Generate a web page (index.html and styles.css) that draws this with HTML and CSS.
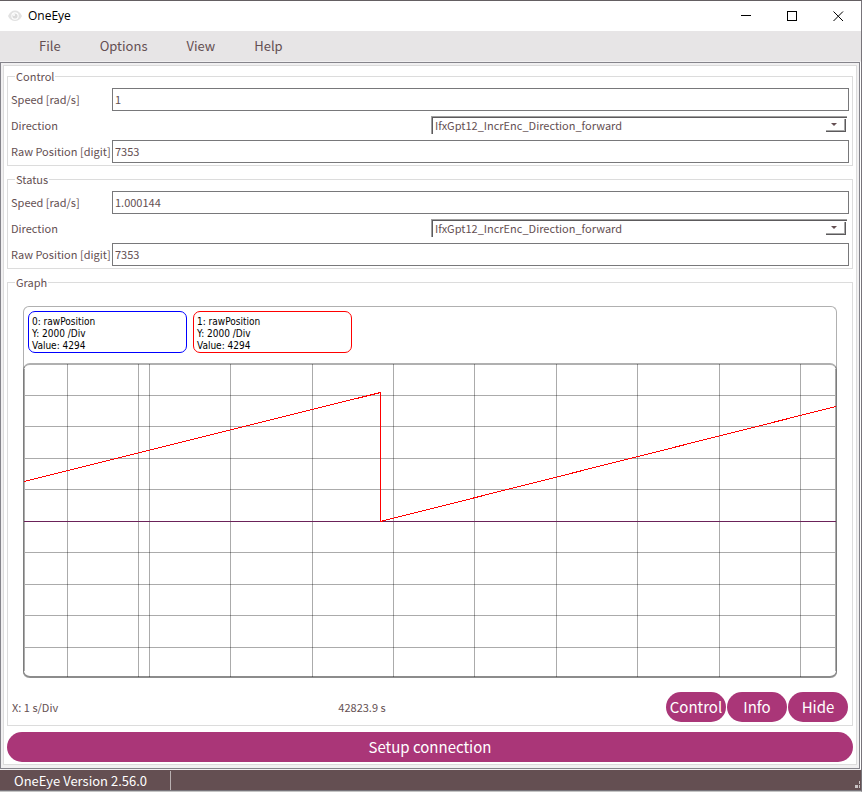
FILE: index.html
```html
<!DOCTYPE html>
<html lang="en">
<head>
<meta charset="utf-8">
<title>OneEye</title>
<link rel="stylesheet" href="styles.css">
</head>
<body>
<div class="window">
  <header class="titlebar">
    <svg class="app-icon" width="14" height="12" viewBox="0 0 14 12" aria-hidden="true">
      <path d="M0 6C1.500 2.500 4 .5 7 .5S12.500 2.500 14 6C12.500 9.500 10 11 7 11S1.500 9.500 0 6Z" fill="#e2e2e2"/>
      <circle cx="7" cy="6" r="3.700" fill="#fff"/>
      <circle cx="7" cy="6" r="2.600" fill="#dadada"/>
      <circle cx="6" cy="5" r="1" fill="#fff"/>
    </svg>
    <h1 class="app-name">OneEye</h1>
    <button class="caption" type="button" aria-label="Minimize"><svg width="12" height="11" viewBox="0 0 12 11"><path d="M1 4.500H11"/></svg></button>
    <button class="caption" type="button" aria-label="Maximize"><svg width="11" height="11" viewBox="0 0 11 11"><path d="M.5 .5H9.500V9.500H.5Z"/></svg></button>
    <button class="caption" type="button" aria-label="Close"><svg class="smooth" width="11" height="11" viewBox="0 0 11 11"><path d="M.5 .5L10 10M10 .5L.5 10"/></svg></button>
  </header>
  <nav class="menubar">
    <button type="button">File</button>
    <button type="button">Options</button>
    <button type="button">View</button>
    <button type="button">Help</button>
  </nav>
  <div class="frame">
    <main class="pane">
      <fieldset class="group">
        <legend>Control</legend>
        <div class="row"><label for="c-speed">Speed [rad/s]</label><input id="c-speed" type="text" value="1"></div>
        <div class="row halves"><label for="c-dir">Direction</label>
          <div class="combo"><select id="c-dir"><option>IfxGpt12_IncrEnc_Direction_forward</option></select><span class="drop" aria-hidden="true"></span></div></div>
        <div class="row"><label for="c-pos">Raw Position [digit]</label><input id="c-pos" type="text" value="7353"></div>
      </fieldset>
      <fieldset class="group">
        <legend>Status</legend>
        <div class="row"><label for="s-speed">Speed [rad/s]</label><input id="s-speed" type="text" value="1.000144"></div>
        <div class="row halves"><label for="s-dir">Direction</label>
          <div class="combo"><select id="s-dir"><option>IfxGpt12_IncrEnc_Direction_forward</option></select><span class="drop" aria-hidden="true"></span></div></div>
        <div class="row"><label for="s-pos">Raw Position [digit]</label><input id="s-pos" type="text" value="7353"></div>
      </fieldset>
      <fieldset class="group graph">
        <legend>Graph</legend>
        <div class="graph-body">
          <div class="chart">
            <div class="channels">
              <div class="channel blue"><div>0: rawPosition</div><div>Y: 2000 /Div</div><div>Value: 4294</div></div>
              <div class="channel red"><div>1: rawPosition</div><div>Y: 2000 /Div</div><div>Value: 4294</div></div>
            </div>
            <div class="plot">
              <svg viewBox="0 0 814 315" preserveAspectRatio="none" role="img" aria-label="rawPosition over time">
                <path class="grid" d="M44.500 1V314M115.500 1V314M126.500 1V314M207.500 1V314M289.500 1V314M370.500 1V314M451.500 1V314M533.500 1V314M614.500 1V314M696.500 1V314M777.500 1V314"/>
                <path class="grid" d="M1 32.500H813M1 63.500H813M1 95.500H813M1 126.500H813M1 189.500H813M1 221.500H813M1 252.500H813M1 284.500H813M1.500 6V308M812.500 6V308"/>
                <path class="axis" d="M1 158.500H813"/>
                <path class="trace" d="M1 118.500L357.500 29.500V158.500L813 43.500"/>
              </svg>
            </div>
          </div>
          <div class="graph-foot">
            <span>X: 1 s/Div</span>
            <span class="time">42823.9 s</span>
            <div class="actions">
              <button class="pill" type="button">Control</button>
              <button class="pill" type="button">Info</button>
              <button class="pill" type="button">Hide</button>
            </div>
          </div>
        </div>
      </fieldset>
      <button class="pill wide" type="button">Setup connection</button>
    </main>
  </div>
  <footer class="statusbar">
    <span class="version">OneEye Version 2.56.0</span>
    <svg class="grip" width="6" height="7" viewBox="0 0 6 7" aria-hidden="true"><path d="M0 4H3V7H0ZM4 4H5V7H4ZM4 0H5V3H4Z" fill="#c9c3c4"/></svg>
  </footer>
</div>
</body>
</html>
```
FILE: styles.css
```css
* { box-sizing: border-box; }

body {
  margin: 0;
  background: #fff;
  color: #644f52;
  font-family: "Noto Sans CJK SC", "Noto Sans", sans-serif;
  font-size: 11px;
  line-height: 15px;
}

button, input, select { font: inherit; color: inherit; }

.window {
  display: flex;
  flex-direction: column;
  min-height: 100vh;
  border-top: 1px solid #645f62;
  border-right: 1px solid #77747a;
  border-bottom: 1px solid #c4c4c4;
}

.titlebar {
  display: flex;
  align-items: center;
  height: 30px;
  padding-left: 8px;
  background: #fff;
}
.app-icon { margin-right: 6px; }
.app-name {
  flex: 1;
  margin: 0;
  color: #000;
  font: 400 12px/16px "Open Sans", "Noto Sans", sans-serif;
}
.caption {
  display: flex;
  align-items: center;
  justify-content: center;
  width: 46px;
  height: 30px;
  padding: 0;
  border: 0;
  background: none;
}
.caption path { fill: none; stroke: #000; shape-rendering: crispEdges; }
.caption .smooth path { shape-rendering: auto; }

.menubar {
  display: flex;
  gap: 39px;
  height: 31px;
  padding: 0 39px 1px;
  border-bottom: 1px solid #f1f0f1;
  background: #e7e5e6;
}
.menubar button {
  padding: 0;
  border: 0;
  background: none;
  font-size: 13px;
  line-height: 18px;
}

.frame {
  flex: 1;
  display: flex;
  margin-right: 1px;
  padding: 2px 2px 3px;
  border: 1px solid #85848b;
  background: #f1f0f1;
}
.pane {
  flex: 1;
  min-width: 0;
  display: flex;
  flex-direction: column;
  padding: 3px 3px 2px;
  border: 1px solid #dcdcdc;
  background: #fff;
}

.group {
  min-width: 0;
  margin: 0 0 6px;
  padding: 4px 3px 2px;
  border: 1px solid #dcdcdc;
}
.group legend { margin-left: 4px; padding: 0 1px; }

.row {
  display: grid;
  grid-template-columns: 101px 1fr;
  align-items: center;
  height: 23px;
}
.row + .row { margin-top: 3px; }
.row.halves { grid-template-columns: 1fr 1fr; }
.row label { white-space: nowrap; }
.row input {
  width: 100%;
  height: 23px;
  padding: 0 2px 1px;
  border: 1px solid #78787a;
  border-radius: 0;
  background: #fff;
}

.combo {
  position: relative;
  align-self: start;
  height: 18px;
  margin: 2px 2px 0 1px;
  border-top: 1px solid #a0a0a0;
  border-left: 1px solid #a0a0a0;
}
.combo select {
  display: block;
  width: 100%;
  height: 17px;
  padding: 0 24px 2px 2px;
  border: 0 solid #5c5a5c;
  border-width: 1px 0 0 1px;
  border-radius: 0;
  background: #fff;
  appearance: none;
}
.drop {
  position: absolute;
  right: 1px;
  bottom: 2px;
  width: 20px;
  height: 13px;
  border: 0 solid #5c5a5c;
  border-width: 0 1px 1px 0;
  box-shadow: inset -1px -1px #a8a8a8;
  pointer-events: none;
}
.drop::before {
  content: "";
  position: absolute;
  left: 5px;
  top: 4px;
  border: 3px solid transparent;
  border-top-color: #644f52;
  border-bottom: 0;
}

.graph {
  flex: 1;
  display: flex;
  flex-direction: column;
  padding-bottom: 3px;
}
.graph-body { flex: 1; display: flex; flex-direction: column; }
.chart {
  flex: 1;
  display: flex;
  flex-direction: column;
  margin: 12px 12px 14px;
  border: 1px solid #b0b0b0;
  border-bottom: 0;
  border-radius: 6px;
}
.channels { display: flex; gap: 6px; padding: 4px 4px 10px; }
.channel {
  width: 159px;
  height: 42px;
  padding: 4px 3px;
  border: 1px solid;
  border-radius: 7px;
  font: 10px/12px "DejaVu Sans Condensed", "DejaVu Sans", sans-serif;
}
.channel div { color: #000; }
.blue { border-color: #00f; }
.red { border-color: #f00; }

.plot {
  flex: 1;
  display: grid;
  min-height: 200px;
  margin: 0 -1px;
  border: 1px solid #7c7c7c;
  border-top: 2px solid #b0b0b0;
  border-bottom: 2px solid #8c8c8c;
  border-radius: 7px;
}
.plot svg {
  width: calc(100% + 2px);
  height: calc(100% + 4px);
  min-height: 0;
  margin: -2px -1px;
}
.plot path {
  fill: none;
  shape-rendering: crispEdges;
  vector-effect: non-scaling-stroke;
}
.grid { stroke: #000; stroke-opacity: .33; }
.plot .axis { stroke: #6b2259; }
.trace { stroke: #f00; }

.graph-foot {
  display: grid;
  grid-template-columns: 1fr auto 1fr;
  align-items: center;
  padding: 0 1px;
}
.time { margin-right: 136px; }
.actions { display: flex; justify-content: flex-end; gap: 1px; }

.pill {
  width: 60px;
  height: 30px;
  padding: 0;
  border: 0;
  border-radius: 15px;
  background: #aa3678;
  color: #fff;
  font-size: 15px;
  line-height: 20px;
}
.wide { width: 100%; }

.statusbar {
  display: flex;
  align-items: center;
  height: 22px;
  border-top: 1px solid #f1f0f1;
  border-bottom: 1px solid #77747a;
  background: #644f52;
  color: #fff;
  font-size: 13px;
  line-height: 18px;
}
.version {
  width: 171px;
  padding: 1px 0 0 14px;
  border-right: 1px solid #b9b0b1;
}
.grip { margin: 8px 0 0 auto; }
```
